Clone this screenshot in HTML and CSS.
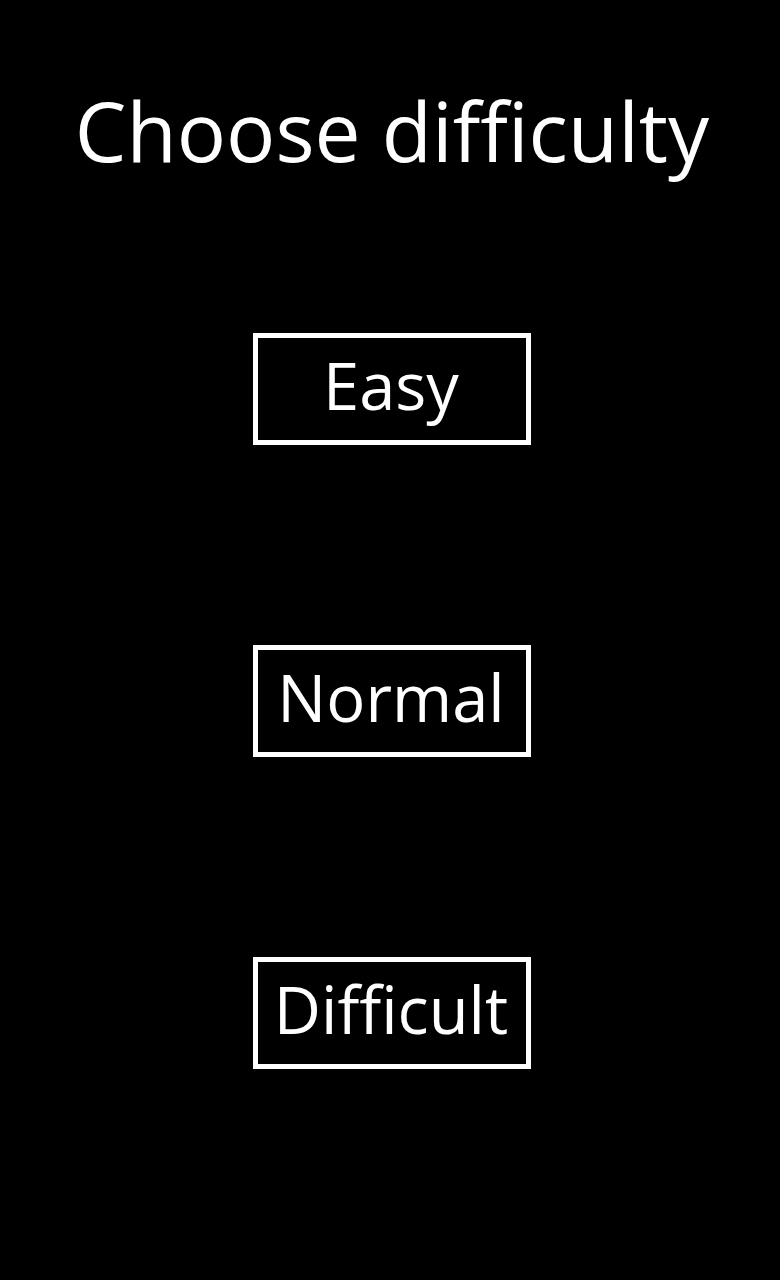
FILE: index.html
```html
<!DOCTYPE html>
<html lang="en">
<head>
<meta charset="utf-8">
<meta name="viewport" content="width=device-width, initial-scale=1">
<title>Choose difficulty</title>
<link rel="stylesheet" href="styles.css">
</head>
<body>
<main class="screen">
<h1 class="title">Choose difficulty</h1>
<div class="levels">
<button type="button" class="level">Easy</button>
<button type="button" class="level">Normal</button>
<button type="button" class="level">Difficult</button>
</div>
</main>
</body>
</html>
```
FILE: styles.css
```css
* { box-sizing: border-box; }
body {
  margin: 0;
  background: #000;
  color: #fff;
  font-family: "Segoe UI", "Open Sans", "Noto Sans", sans-serif;
}
.screen {
  min-height: 100vh;
  padding: 70px 16px 70px 20px;
  display: flex;
  flex-direction: column;
  align-items: center;
}
.title {
  margin: 0;
  font-size: 82px;
  line-height: 120px;
  font-weight: 400;
  text-align: center;
}
.levels {
  margin-top: 143px;
  display: flex;
  flex-direction: column;
  align-items: center;
  gap: 200px;
}
.level {
  width: 278px;
  min-height: 112px;
  padding: 0 2px 8px 0;
  border: 5px solid #fff;
  background: #000;
  color: #fff;
  font-family: inherit;
  font-size: 65px;
  line-height: 90px;
  white-space: nowrap;
}
```
